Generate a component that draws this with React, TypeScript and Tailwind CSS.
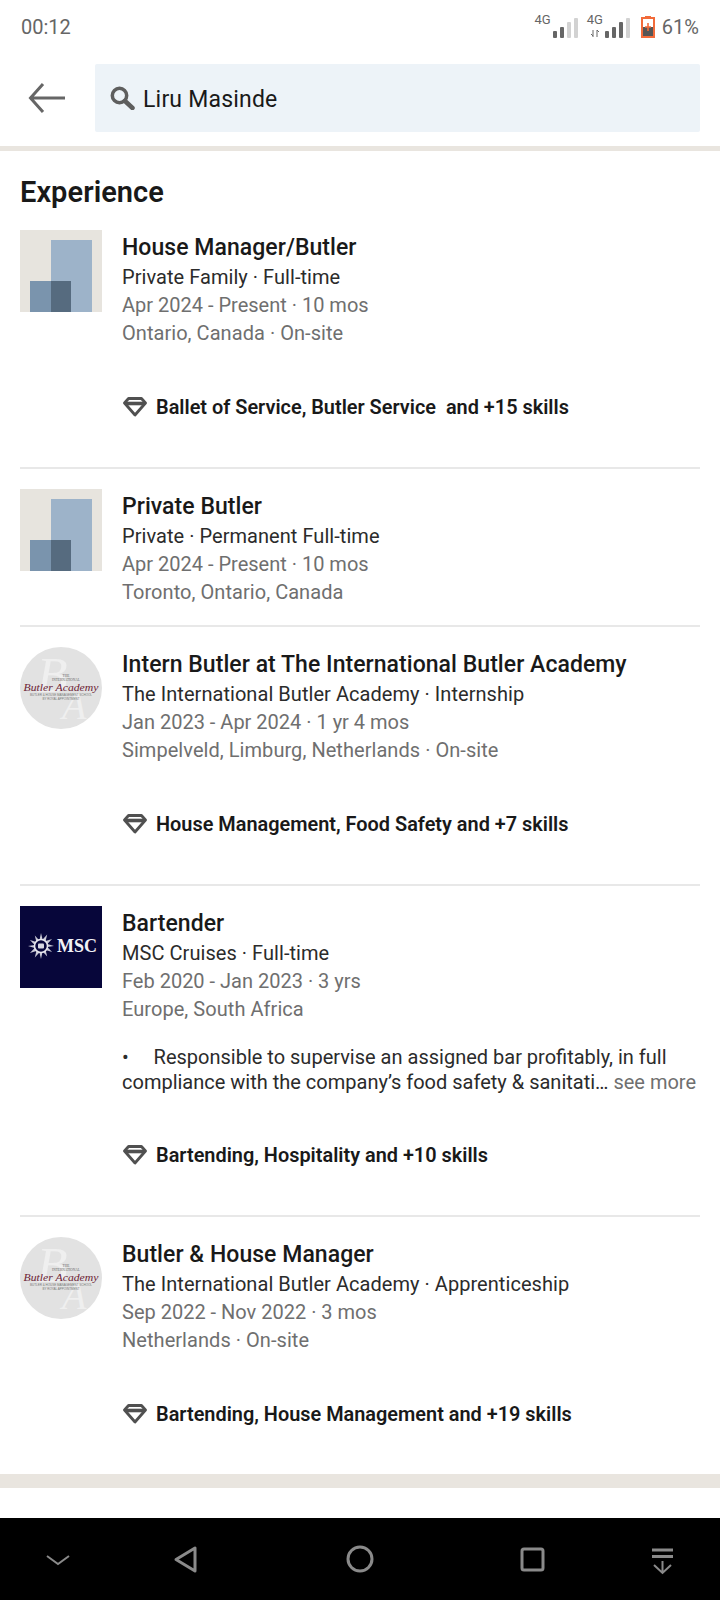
const Placeholder = () => (
    <svg width="82" height="82" viewBox="0 0 82 82" className="block shrink-0">
        <rect width="82" height="82" fill="#e7e4de" />
        <rect x="31" y="10" width="41" height="72" fill="#9db3c9" />
        <rect x="10" y="51" width="41" height="31" fill="#7a94ad" />
        <rect x="31" y="51" width="20" height="31" fill="#566b7f" />
    </svg>
)

const ButlerLogo = () => (
    <svg width="82" height="82" viewBox="0 0 82 82" className="block shrink-0">
        <circle cx="41" cy="41" r="41" fill="#e2e2e2" />
        <text x="17" y="45" fontSize="50" fontFamily="Liberation Serif, serif" fontStyle="italic" fill="#efefef">B</text>
        <text x="42" y="72" fontSize="40" fontFamily="Liberation Serif, serif" fontStyle="italic" fill="#efefef">A</text>
        <text x="46" y="30" fontSize="3.5" textAnchor="middle" fontFamily="Liberation Serif, serif" fill="#666">THE</text>
        <text x="46" y="34" fontSize="3.5" textAnchor="middle" fontFamily="Liberation Serif, serif" fill="#666">INTERNATIONAL</text>
        <text x="41" y="44" fontSize="11" textAnchor="middle" fontFamily="Liberation Serif, serif" fontStyle="italic" fill="#6d2436" textLength="75" lengthAdjust="spacingAndGlyphs">Butler Academy</text>
        <text x="41" y="49" fontSize="3" textAnchor="middle" fontFamily="Liberation Sans, sans-serif" fill="#777">BUTLER & HOUSE MANAGEMENT SCHOOL</text>
        <text x="41" y="53" fontSize="3" textAnchor="middle" fontFamily="Liberation Sans, sans-serif" fill="#777">BY ROYAL APPOINTMENT</text>
    </svg>
)

const MscLogo = () => (
    <svg width="82" height="82" viewBox="0 0 82 82" className="block shrink-0">
        <rect width="82" height="82" fill="#07063a" />
        <path
            d="M21 27l1.6 6.5 4.6-5-1.6 6.6 6.5-2-4.8 4.8L34 40l-6.7 1.100 4.800 4.800-6.500-2 1.600 6.600-4.600-5L21 53l-1.600-6.500-4.600 5 1.600-6.600-6.500 2 4.800-4.800L8 40l6.700-1.100-4.800-4.800 6.500 2-1.600-6.600 4.600 5z"
            fill="#c9c9d6"
        />
        <circle cx="21" cy="40" r="6.500" fill="#07063a" stroke="#e8e8ee" strokeWidth="1.500" />
        <rect x="18" y="37.500" width="6" height="5" rx="1" fill="#d8d8e2" />
        <text x="37" y="46" fontSize="18" fontWeight="700" fontFamily="Liberation Serif, serif" fill="#f2f2f6">MSC</text>
    </svg>
)

const Gem = () => (
    <svg width="24" height="20" viewBox="0 0 24 20" className="ml-[1px] mt-[-2px] shrink-0">
        <path d="M5.500 1.500h13l4 4.500L12 18 1.500 6z" fill="none" stroke="#505050" strokeWidth="2.800" strokeLinejoin="round" />
        <path d="M3 6.500h18" stroke="#505050" strokeWidth="3.600" />
    </svg>
)

const items = [
    {
        logo: <Placeholder />,
        title: "House Manager/Butler",
        sub: "Private Family · Full-time",
        date: "Apr 2024 - Present · 10 mos",
        place: "Ontario, Canada · On-site",
        skills: "Ballet of Service, Butler Service  and +15 skills",
    },
    {
        logo: <Placeholder />,
        title: "Private Butler",
        sub: "Private · Permanent Full-time",
        date: "Apr 2024 - Present · 10 mos",
        place: "Toronto, Ontario, Canada",
    },
    {
        logo: <ButlerLogo />,
        title: "Intern Butler at The International Butler Academy",
        sub: "The International Butler Academy · Internship",
        date: "Jan 2023 - Apr 2024 · 1 yr 4 mos",
        place: "Simpelveld, Limburg, Netherlands · On-site",
        skills: "House Management, Food Safety and +7 skills",
    },
    {
        logo: <MscLogo />,
        title: "Bartender",
        sub: "MSC Cruises · Full-time",
        date: "Feb 2020 - Jan 2023 · 3 yrs",
        place: "Europe, South Africa",
        desc: true,
        skills: "Bartending, Hospitality and +10 skills",
    },
    {
        logo: <ButlerLogo />,
        title: "Butler & House Manager",
        sub: "The International Butler Academy · Apprenticeship",
        date: "Sep 2022 - Nov 2022 · 3 mos",
        place: "Netherlands · On-site",
        skills: "Bartending, House Management and +19 skills",
    },
]

const Bars = ({ on }: { on: number }) => (
    <div className="flex h-[21px] items-end gap-[3px]">
        {[7, 11, 16, 20].map((h, i) => (
            <div
                key={i}
                className={i < on ? "w-[4px] rounded-[1px] bg-[#666]" : "w-[4px] rounded-[1px] bg-[#d2d2d2]"}
                style={{ height: h }}
            />
        ))}
    </div>
)

export default function App() {
    return (
        <div className="relative h-[1600px] w-[720px] overflow-hidden bg-white font-['Roboto',sans-serif] text-[#191919]">
            {/* status bar */}
            <div className="flex h-[54px] items-center justify-between pl-[21px] pr-[21px] text-[#666]">
                <div className="text-[20px]">00:12</div>
                <div className="flex items-center">
                    <div className="flex items-start">
                        <span className="mt-[-4px] text-[13px] leading-[14px]">4G</span>
                        <div className="ml-[2px]"><Bars on={2} /></div>
                    </div>
                    <div className="relative ml-[9px] flex items-start">
                        <span className="mt-[-4px] text-[13px] leading-[14px]">4G</span>
                        <svg width="8" height="7" viewBox="0 0 8 7" className="absolute left-[4px] top-[13px]">
                            <path d="M2 0v7M0 4l2 2M6 7V0M6 0l2 2" fill="none" stroke="#666" strokeWidth="1" />
                        </svg>
                        <div className="ml-[2px]"><Bars on={3} /></div>
                    </div>
                    <svg width="14" height="22" viewBox="0 0 14 22" className="ml-[11px]">
                        <rect x="4" y="0" width="6" height="2" fill="#f26b3a" />
                        <rect x="1" y="2" width="12" height="19" fill="#fff" stroke="#f26b3a" strokeWidth="2" />
                        <rect x="2" y="11" width="10" height="9" fill="#555" />
                        <path d="M7 7v8M4 11h6" stroke="#f26b3a" strokeWidth="1.600" />
                    </svg>
                    <span className="ml-[7px] text-[20px]">61%</span>
                </div>
            </div>

            {/* search header */}
            <div className="flex h-[97px] items-center border-b-[5px] border-[#e9e5df] pb-[5px] pl-[28px] pr-[20px]">
                <svg width="38" height="30" viewBox="0 0 38 30" className="shrink-0">
                    <path d="M37 15H3M15 1 2.500 15 15 29" fill="none" stroke="#666" strokeWidth="3" />
                </svg>
                <div className="ml-[29px] flex h-[68px] flex-1 items-center rounded-[2px] bg-[#edf3f8] pl-[15px]">
                    <svg width="25" height="24" viewBox="0 0 25 24" className="shrink-0">
                        <circle cx="9.500" cy="9.500" r="7.200" fill="none" stroke="#5e5e5e" strokeWidth="3.500" />
                        <path d="M15 15l7.500 7" stroke="#5e5e5e" strokeWidth="4.500" strokeLinecap="round" />
                    </svg>
                    <span className="ml-[8px] pt-[5px] text-[23px] tracking-[0.2px]">Liru Masinde</span>
                </div>
            </div>

            {/* experience */}
            <h2 className="pl-[20px] pt-[23px] text-[29px] font-semibold leading-[36px] tracking-[0.05px]">Experience</h2>
            <div className="mt-[20px] px-[20px]">
                {items.map((it, i) => (
                    <div
                        key={i}
                        className={
                            i === items.length - 1
                                ? "flex gap-[20px]"
                                : "mb-[20px] flex gap-[20px] border-b-2 border-[#e8e8e8]"
                        }
                    >
                        {it.logo}
                        <div className="flex-1 pb-[19px]">
                            <div className="mb-[-2px] text-[23px] font-medium leading-[35px] tracking-[0.05px]">{it.title}</div>
                            <div className="text-[20px] leading-[28px] tracking-[0.05px] text-[#2b2b2b]">{it.sub}</div>
                            <div className="text-[20px] leading-[28px] text-[#6f6f6f]">{it.date}</div>
                            <div className="text-[20px] leading-[28px] tracking-[0.05px] text-[#6f6f6f]">{it.place}</div>
                            {it.desc && (
                                <div className="mt-[22px] text-[20px] leading-[24.5px] text-[#2b2b2b]">
                                    <div className="whitespace-pre">•     Responsible to supervise an assigned bar profitably, in full</div>
                                    <div className="whitespace-nowrap">
                                        compliance with the company’s food safety &amp; sanitati… <span className="text-[#6f6f6f]">see more</span>
                                    </div>
                                </div>
                            )}
                            {it.skills && (
                                <div className={it.desc ? "mt-[48px] mb-[26px] flex items-center gap-[9px] whitespace-pre text-[19.9px] font-semibold leading-[28px]" : "mt-[47px] mb-[26px] flex items-center gap-[9px] whitespace-pre text-[19.9px] font-semibold leading-[28px]"}>
                                    <Gem />
                                    {it.skills}
                                </div>
                            )}
                        </div>
                    </div>
                ))}
            </div>
            <div className="h-[14px] bg-[#e9e5df]" />
            <h2 className="pl-[20px] pt-[24px] text-[29px] font-semibold leading-[36px]">Education</h2>

            {/* nav bar */}
            <div className="absolute bottom-0 left-0 h-[82px] w-full bg-black">
                <svg width="720" height="82" viewBox="0 0 720 82" fill="none" stroke="#8a8a8a" strokeWidth="2.500">
                    <path d="M47 38 58 46 69 38" strokeWidth="2" />
                    <path d="M195 30v23l-19-11.500z" strokeLinejoin="round" strokeWidth="3" />
                    <ellipse cx="360" cy="41" rx="12" ry="12" strokeWidth="3" />
                    <rect x="522" y="31" width="21" height="21" rx="2" strokeWidth="3" />
                    <path d="M652 32h21M652 38.500h21" strokeWidth="3" />
                    <path d="M662.500 43v12M654 47l8.500 8 8.500-8" strokeWidth="2" />
                </svg>
            </div>
        </div>
    )
}
